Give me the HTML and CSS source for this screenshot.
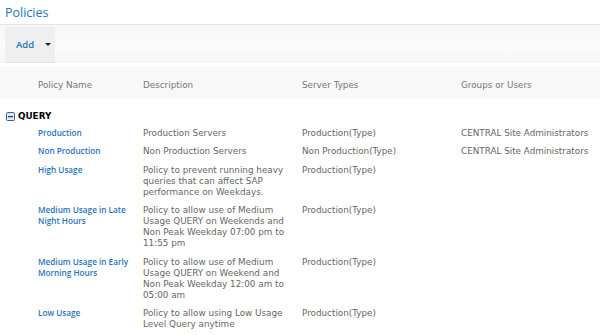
FILE: index.html
```html
<!DOCTYPE html>
<html>
<head>
<meta charset="utf-8">
<link rel="stylesheet" href="styles.css">
</head>
<body>
<div class="page">
  <h1 class="title">Policies</h1>
  <div class="toolbar">
    <div class="add-btn">
      <span class="add">Add</span>
      <span class="caret"></span>
    </div>
  </div>
  <table class="list">
    <colgroup>
      <col class="c0"><col class="c1"><col class="c2"><col class="c3"><col class="c4">
    </colgroup>
    <thead>
      <tr class="hdr">
        <th></th>
        <th>Policy Name</th>
        <th>Description</th>
        <th>Server Types</th>
        <th>Groups or Users</th>
      </tr>
    </thead>
    <tbody>
      <tr class="group">
        <td colspan="5"><span class="grp"><svg class="minus" width="9" height="9" viewBox="0 0 9 9"><rect x="0.5" y="0.5" width="8" height="8" rx="1" fill="#dfe7f0" stroke="#3f5f86"/><rect x="2" y="4" width="5" height="1.2" fill="#23415f"/></svg><b>QUERY</b></span></td>
      </tr>
      <tr>
        <td></td>
        <td class="name">Production</td>
        <td>Production Servers</td>
        <td>Production(Type)</td>
        <td>CENTRAL Site Administrators</td>
      </tr>
      <tr>
        <td></td>
        <td class="name">Non Production</td>
        <td>Non Production Servers</td>
        <td>Non Production(Type)</td>
        <td>CENTRAL Site Administrators</td>
      </tr>
      <tr>
        <td></td>
        <td class="name">High Usage</td>
        <td>Policy to prevent running heavy queries that can affect SAP performance on Weekdays.</td>
        <td>Production(Type)</td>
        <td></td>
      </tr>
      <tr>
        <td></td>
        <td class="name">Medium Usage in Late Night Hours</td>
        <td>Policy to allow use of Medium Usage QUERY on Weekends and Non Peak Weekday 07:00 pm to 11:55 pm</td>
        <td>Production(Type)</td>
        <td></td>
      </tr>
      <tr>
        <td></td>
        <td class="name">Medium Usage in Early Morning Hours</td>
        <td>Policy to allow use of Medium Usage QUERY on Weekend and Non Peak Weekday 12:00 am to 05:00 am</td>
        <td>Production(Type)</td>
        <td></td>
      </tr>
      <tr>
        <td></td>
        <td class="name">Low Usage</td>
        <td>Policy to allow using Low Usage Level Query anytime</td>
        <td>Production(Type)</td>
        <td></td>
      </tr>
    </tbody>
  </table>
</div>
</body>
</html>
```

FILE: styles.css
```css
html, body {
  margin: 0;
  padding: 0;
  background: #fff;
}
.page {
  width: 600px;
  font-family: "DejaVu Sans", Verdana, sans-serif;
  font-size: 8.8px;
  color: #666;
}
.title {
  margin: 0;
  height: 24px;
  padding: 4px 0 0 5px;
  box-sizing: border-box;
  font-family: "Open Sans", "Noto Sans", sans-serif;
  font-weight: 400;
  font-size: 12.5px;
  line-height: 18px;
  color: #1a78c2;
}
.toolbar {
  border-top: 1px solid #e6e6e6;
  height: 39px;
  background: linear-gradient(to bottom, #f7f7f7, #fbfbfb 60%, #f6f6f6);
  padding: 2px 0 0 5px;
  box-sizing: border-box;
  display: flex;
}
.add-btn {
  width: 50px;
  height: 36px;
  background: #efefef;
  border-bottom: 1px solid #e2e2e2;
  box-sizing: border-box;
  display: flex;
  align-items: center;
  padding: 0 0 1px 11px;
}
.add {
  font-family: "Open Sans", "Noto Sans", sans-serif;
  font-weight: 600;
  font-size: 9.5px;
  color: #1f73bb;
}
.caret {
  margin-left: 11px;
  width: 0;
  height: 0;
  border-left: 3px solid transparent;
  border-right: 3px solid transparent;
  border-top: 3px solid #222;
}
.list {
  margin-top: 3px;
  width: 600px;
  border-collapse: collapse;
  table-layout: fixed;
}
.c0 { width: 32px; }
.c1 { width: 105px; }
.c2 { width: 159px; }
.c3 { width: 159px; }
.c4 { width: 145px; }
.list th {
  background: #f8f8f8;
  font-weight: 400;
  text-align: left;
  color: #777;
  line-height: 11px;
  padding: 14px 0 8px 6px;
}
.list td {
  vertical-align: top;
  line-height: 11px;
  padding: 4px 0 3.4px 6px;
}
.list tr.group td {
  padding: 12px 0 2px 6px;
}
.grp {
  display: flex;
  align-items: center;
  gap: 3px;
  color: #000;
}
.grp b {
  font-weight: 700;
  font-size: 8.8px;
}
.list td.name {
  font-family: "Open Sans", "Noto Sans", sans-serif;
  font-weight: 600;
  font-size: 8.2px;
  color: #1f73bb;
  padding-top: 3px;
}
```
